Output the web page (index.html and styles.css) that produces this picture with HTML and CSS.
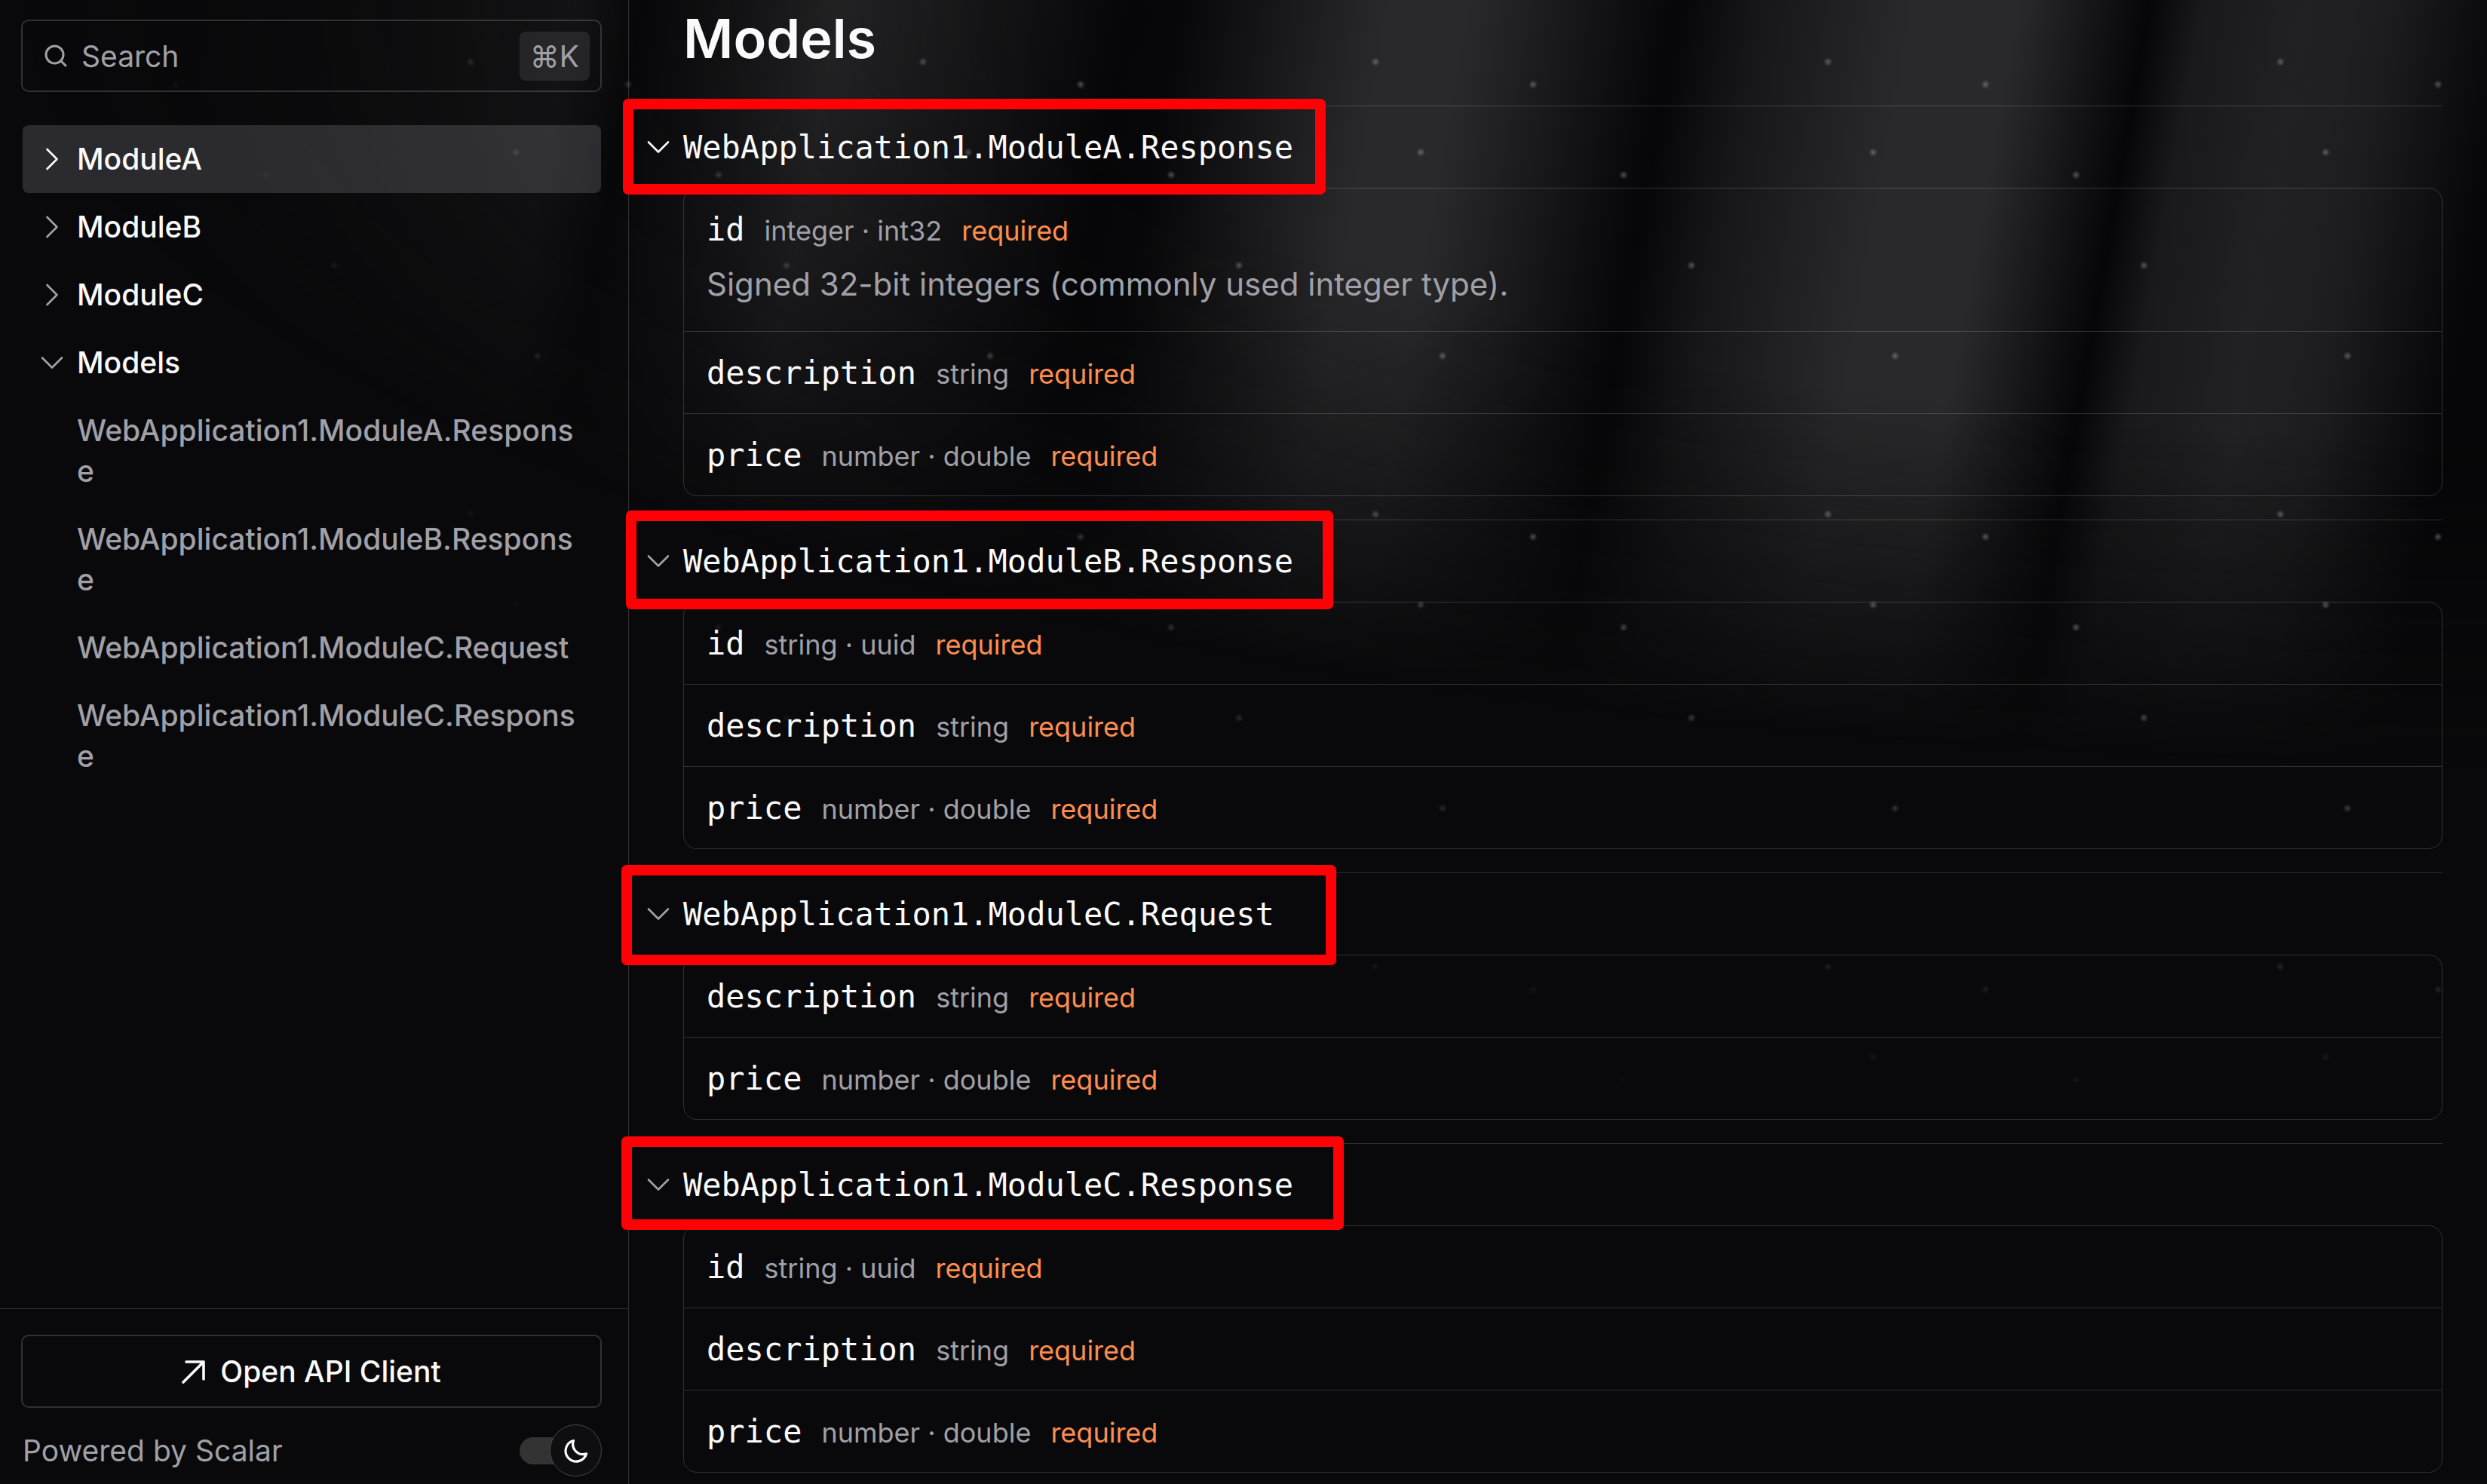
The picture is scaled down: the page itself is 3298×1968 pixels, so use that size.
FILE: index.html
```html
<!DOCTYPE html>
<html lang="en">
<head>
<meta charset="utf-8">
<meta name="viewport" content="width=device-width, initial-scale=1">
<title>Models</title>
<link rel="stylesheet" href="styles.css">
</head>
<body>
<svg class="symbols" aria-hidden="true">
  <symbol id="chevron-down" viewBox="0 0 30 30"><path d="M2 8.500 15 21.500 28 8.500" fill="none" stroke="currentColor" stroke-width="2.600" stroke-linecap="round" stroke-linejoin="round"/></symbol>
  <symbol id="chevron-right" viewBox="0 0 30 30"><path d="M8.500 2 21.500 15 8.500 28" fill="none" stroke="currentColor" stroke-width="2.600" stroke-linecap="round" stroke-linejoin="round"/></symbol>
</svg>
<div class="beams"></div>
<div class="stars"></div>
<div class="app">
  <aside class="sidebar">
    <label class="search">
      <svg class="search-icon" viewBox="0 0 32 32" aria-hidden="true"><g fill="none" stroke="currentColor" stroke-width="3" stroke-linecap="round"><circle cx="14.500" cy="14.500" r="11.500"/><path d="M23 23 29 29"/></g></svg>
      <input class="search-input" type="text" placeholder="Search" aria-label="Search">
      <kbd class="shortcut">⌘K</kbd>
    </label>
    <nav class="nav">
      <a class="nav-item active" href="#a"><svg class="chevron"><use href="#chevron-right"/></svg><span>ModuleA</span></a>
      <a class="nav-item" href="#b"><svg class="chevron"><use href="#chevron-right"/></svg><span>ModuleB</span></a>
      <a class="nav-item" href="#c"><svg class="chevron"><use href="#chevron-right"/></svg><span>ModuleC</span></a>
      <a class="nav-item" href="#models"><svg class="chevron"><use href="#chevron-down"/></svg><span>Models</span></a>
      <a class="nav-sub" href="#m1">WebApplication1.ModuleA.Response</a>
      <a class="nav-sub" href="#m2">WebApplication1.ModuleB.Response</a>
      <a class="nav-sub" href="#m3">WebApplication1.ModuleC.Request</a>
      <a class="nav-sub" href="#m4">WebApplication1.ModuleC.Response</a>
    </nav>
    <footer class="footer">
      <button class="client-button" type="button">
        <svg class="arrow" viewBox="0 0 32 32" aria-hidden="true"><path d="M2 30 29 3M6 3H29V26" fill="none" stroke="currentColor" stroke-width="3.600" stroke-linecap="round" stroke-linejoin="round"/></svg>
        <span>Open API Client</span>
      </button>
      <div class="footer-row">
        <a class="powered" href="#scalar">Powered by Scalar</a>
        <label class="theme">
          <input class="theme-track" type="checkbox" role="switch" aria-label="Dark mode" checked>
          <span class="theme-knob"><svg class="moon" viewBox="0 0 32 32" aria-hidden="true"><path d="M12.500 2.500A14 14 0 1 0 29.600 19.800 13.500 13.500 0 0 1 12.500 2.500Z" fill="none" stroke="currentColor" stroke-width="3.200" stroke-linejoin="round"/></svg></span>
        </label>
      </div>
    </footer>
  </aside>
  <main class="content">
    <h1 class="title" id="models">Models</h1>
    <section class="model" id="m1">
      <button class="model-head current" type="button"><svg class="chevron"><use href="#chevron-down"/></svg><span>WebApplication1.ModuleA.Response</span></button>
      <ul class="card">
        <li class="prop"><div class="prop-head"><span class="name">id</span><span class="type">integer · int32</span><span class="required">required</span></div><p class="note">Signed 32-bit integers (commonly used integer type).</p></li>
        <li class="prop"><div class="prop-head"><span class="name">description</span><span class="type">string</span><span class="required">required</span></div></li>
        <li class="prop"><div class="prop-head"><span class="name">price</span><span class="type">number · double</span><span class="required">required</span></div></li>
      </ul>
      <div class="mark mark-1"></div>
    </section>
    <section class="model" id="m2">
      <button class="model-head" type="button"><svg class="chevron"><use href="#chevron-down"/></svg><span>WebApplication1.ModuleB.Response</span></button>
      <ul class="card">
        <li class="prop"><div class="prop-head"><span class="name">id</span><span class="type">string · uuid</span><span class="required">required</span></div></li>
        <li class="prop"><div class="prop-head"><span class="name">description</span><span class="type">string</span><span class="required">required</span></div></li>
        <li class="prop"><div class="prop-head"><span class="name">price</span><span class="type">number · double</span><span class="required">required</span></div></li>
      </ul>
      <div class="mark mark-2"></div>
    </section>
    <section class="model" id="m3">
      <button class="model-head" type="button"><svg class="chevron"><use href="#chevron-down"/></svg><span>WebApplication1.ModuleC.Request</span></button>
      <ul class="card">
        <li class="prop"><div class="prop-head"><span class="name">description</span><span class="type">string</span><span class="required">required</span></div></li>
        <li class="prop"><div class="prop-head"><span class="name">price</span><span class="type">number · double</span><span class="required">required</span></div></li>
      </ul>
      <div class="mark mark-3"></div>
    </section>
    <section class="model" id="m4">
      <button class="model-head" type="button"><svg class="chevron"><use href="#chevron-down"/></svg><span>WebApplication1.ModuleC.Response</span></button>
      <ul class="card">
        <li class="prop"><div class="prop-head"><span class="name">id</span><span class="type">string · uuid</span><span class="required">required</span></div></li>
        <li class="prop"><div class="prop-head"><span class="name">description</span><span class="type">string</span><span class="required">required</span></div></li>
        <li class="prop"><div class="prop-head"><span class="name">price</span><span class="type">number · double</span><span class="required">required</span></div></li>
      </ul>
      <div class="mark mark-4"></div>
    </section>
  </main>
</div>
</body>
</html>
```
FILE: styles.css
```css
:root {
  --bg: #09090b;
  --text: #fafafa;
  --muted: #a0a0a8;
  --line: rgba(255, 255, 255, 0.16);
  --orange: #ff8d4d;
  --sans: Inter, "Liberation Sans", sans-serif;
  --mono: "DejaVu Sans Mono", "Liberation Mono", monospace;
}

* {
  box-sizing: border-box;
}

body {
  margin: 0;
  background: var(--bg);
  color: var(--text);
  font-family: var(--sans);
  font-size: 39px;
}

a {
  color: inherit;
  text-decoration: none;
}

button,
input {
  font: inherit;
  color: inherit;
  background: none;
  border: 0;
  margin: 0;
  padding: 0;
}

.symbols {
  display: none;
}

/* Light beams and star dots behind the page */
.beams,
.stars {
  position: absolute;
  top: 0;
  left: 0;
  right: 0;
  pointer-events: none;
  mask-image: radial-gradient(ellipse at 100% 0%, #000 40%, transparent 70%);
}

.beams {
  height: 52vh;
  background: linear-gradient(100deg,
    #09090b 8%, #181818 18%, #1c1c1e 22%, #070709 24.500%,
    #29292b 32%, #1b1b1d 36%, #060608 43%, #070709 45%,
    #29292b 53%, #29292b 56%, #060608 64%,
    #161618 67%, #29292b 73%, #29292b 77%, #060608 82%,
    #19191b 84%, #212123 88%, #1d1d1f 91%, #060608 96%);
}

.stars {
  height: 81vh;
  --dot: rgba(255, 255, 255, 0.280), transparent;
  background-image:
    radial-gradient(6px 6px at 24px 82px, var(--dot)),
    radial-gradient(6px 6px at 233px 112px, var(--dot)),
    radial-gradient(6px 6px at 84px 202px, var(--dot)),
    radial-gradient(6px 6px at 353px 232px, var(--dot)),
    radial-gradient(6px 6px at 443px 352px, var(--dot)),
    radial-gradient(6px 6px at 113px 472px, var(--dot));
  background-size: 600px 600px;
}

.app {
  position: relative;
  display: grid;
  grid-template-columns: 834px minmax(0, 1fr);
  min-height: 100vh;
}

/* Sidebar */
.sidebar {
  display: flex;
  flex-direction: column;
  border-right: 1px solid var(--line);
  font-weight: 500;
}

.search {
  display: flex;
  align-items: center;
  height: 96px;
  margin: 26px 35px 0 28px;
  padding: 0 14px 0 28px;
  border: 2px solid var(--line);
  border-radius: 10px;
  color: var(--muted);
  font-weight: 400;
}

.search-icon {
  width: 32px;
  height: 32px;
  margin-right: 18px;
}

.search-input {
  flex: 1;
  min-width: 0;
  outline: 0;
}

.search-input::placeholder {
  color: inherit;
  opacity: 1;
}

.shortcut {
  padding: 0 14px;
  border-radius: 8px;
  background: rgba(255, 255, 255, 0.090);
  font-family: var(--sans);
  line-height: 65px;
}

.nav {
  display: flex;
  flex-direction: column;
  margin: 44px 36px 0 30px;
  line-height: 54px;
}

.nav-item {
  display: flex;
  align-items: center;
  gap: 18px;
  padding: 18px 24px;
  border-radius: 8px;
}

.nav-item.active {
  background: rgba(240, 240, 255, 0.150);
}

.chevron {
  flex: none;
  width: 30px;
  height: 30px;
  color: var(--muted);
}

.active .chevron,
.current .chevron {
  color: var(--text);
}

.nav-sub {
  padding: 18px 24px 18px 72px;
  color: var(--muted);
  overflow-wrap: anywhere;
}

.footer {
  margin-top: auto;
  padding: 34px 35px 10px 28px;
  border-top: 1px solid var(--line);
}

.client-button {
  display: flex;
  align-items: center;
  justify-content: center;
  gap: 19px;
  width: 100%;
  height: 97px;
  border: 2px solid var(--line);
  border-radius: 10px;
}

.arrow {
  width: 32px;
  height: 32px;
}

.footer-row {
  display: flex;
  align-items: center;
  justify-content: space-between;
  margin-top: 22px;
}

.powered {
  padding-left: 2px;
  color: var(--muted);
  font-weight: 400;
}

.theme {
  display: flex;
  align-items: center;
}

.theme-track {
  appearance: none;
  width: 76px;
  height: 36px;
  border-radius: 18px;
  background: #333;
}

.theme-knob {
  display: grid;
  place-items: center;
  width: 69px;
  height: 69px;
  margin-left: -36px;
  border: 1px solid #48484a;
  border-radius: 50%;
  background: #0e0e10;
}

.moon {
  width: 32px;
  height: 32px;
}

/* Models */
.content {
  padding: 6px 59px 14px 72px;
}

.title {
  margin: 0 0 44px;
  font-size: 72px;
  font-weight: 600;
  line-height: 90px;
}

.model {
  position: relative;
  margin-bottom: 31px;
  border-top: 1px solid var(--line);
}

.model:last-child {
  margin-bottom: 0;
}

.model-head {
  display: flex;
  align-items: center;
  gap: 18px;
  height: 108px;
  margin-left: -48px;
  font-family: var(--mono);
  font-size: 42px;
}

.card {
  margin: 0;
  padding: 0;
  list-style: none;
  border: 1px solid var(--line);
  border-radius: 18px;
}

.prop {
  padding: 25px 30px 22px;
}

.prop + .prop {
  border-top: 1px solid var(--line);
}

.prop-head {
  display: flex;
  align-items: baseline;
  gap: 26px;
  line-height: 60px;
}

.name {
  font-family: var(--mono);
  font-size: 42px;
}

.type,
.required {
  font-size: 36px;
}

.type {
  color: var(--muted);
}

.required {
  color: var(--orange);
}

.note {
  margin: 11px 0 10px;
  color: var(--muted);
  font-size: 42px;
  line-height: 60px;
}

/* Red highlight frames drawn over the model headings */
.mark {
  position: absolute;
  border: 14px solid #ff0004;
  border-radius: 7px;
  pointer-events: none;
}

.mark-1 {
  top: -10px;
  left: -80px;
  width: 932px;
  height: 127px;
}

.mark-2 {
  top: -13px;
  left: -76px;
  width: 938px;
  height: 131px;
}

.mark-3 {
  top: -11px;
  left: -82px;
  width: 948px;
  height: 133px;
}

.mark-4 {
  top: -10px;
  left: -82px;
  width: 958px;
  height: 124px;
}
```
